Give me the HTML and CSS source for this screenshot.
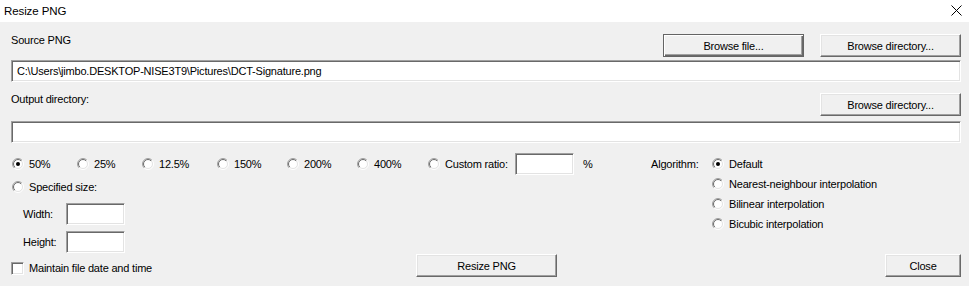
FILE: index.html
```html
<!DOCTYPE html>
<html>
<head>
<meta charset="utf-8">
<link rel="stylesheet" href="styles.css">
</head>
<body>
<svg class="defs" width="0" height="0">
  <defs>
    <linearGradient id="gOut" x1="0" y1="0" x2="1" y2="1">
      <stop offset="0.5" stop-color="#a0a0a0"/>
      <stop offset="0.5" stop-color="#ffffff"/>
    </linearGradient>
    <linearGradient id="gIn" x1="0" y1="0" x2="1" y2="1">
      <stop offset="0.5" stop-color="#696969"/>
      <stop offset="0.5" stop-color="#e3e3e3"/>
    </linearGradient>
    <symbol id="radio" viewBox="0 0 12 12">
      <circle cx="6" cy="6" r="5.5" fill="none" stroke="url(#gOut)" stroke-width="1"/>
      <circle cx="6" cy="6" r="4.5" fill="#fff" stroke="url(#gIn)" stroke-width="1"/>
    </symbol>
  </defs>
</svg>
<div class="window">
  <div class="titlebar">
    <span class="title">Resize PNG</span>
    <svg class="close-x" width="11" height="11" viewBox="0 0 11 11"><path d="M0.5 0.5 L10.5 10.5 M10.5 0.5 L0.5 10.5" stroke="#000" stroke-width="1" fill="none"/></svg>
  </div>
  <div class="content">
    <div class="row-head">
      <span class="lbl">Source PNG</span>
      <button class="btn default">Browse file...</button>
      <button class="btn">Browse directory...</button>
    </div>
    <div class="field wide first">C:\Users\jimbo.DESKTOP-NISE3T9\Pictures\DCT-Signature.png</div>
    <div class="row-head second">
      <span class="lbl">Output directory:</span>
      <button class="btn">Browse directory...</button>
    </div>
    <div class="field wide third"></div>

    <div class="options">
      <div class="left">
        <div class="ratio-row">
          <span class="opt w65"><svg class="rb" width="12" height="12"><use href="#radio"/><circle cx="6" cy="6" r="2" fill="#000"/></svg>50%</span>
          <span class="opt w65"><svg class="rb" width="12" height="12"><use href="#radio"/></svg>25%</span>
          <span class="opt w75"><svg class="rb" width="12" height="12"><use href="#radio"/></svg>12.5%</span>
          <span class="opt w70"><svg class="rb" width="12" height="12"><use href="#radio"/></svg>150%</span>
          <span class="opt w70"><svg class="rb" width="12" height="12"><use href="#radio"/></svg>200%</span>
          <span class="opt w71"><svg class="rb" width="12" height="12"><use href="#radio"/></svg>400%</span>
          <span class="opt w87"><svg class="rb" width="12" height="12"><use href="#radio"/></svg>Custom ratio:</span>
          <span class="field small"></span>
          <span class="pct">%</span>
        </div>
        <div class="spec-row">
          <span class="opt"><svg class="rb" width="12" height="12"><use href="#radio"/></svg>Specified size:</span>
        </div>
        <div class="dim-row">
          <span class="dim-lbl">Width:</span>
          <span class="field small"></span>
        </div>
        <div class="dim-row">
          <span class="dim-lbl">Height:</span>
          <span class="field small"></span>
        </div>
      </div>
      <div class="algo">
        <span class="algo-lbl">Algorithm:</span>
        <div class="algo-list">
          <span class="opt"><svg class="rb" width="12" height="12"><use href="#radio"/><circle cx="6" cy="6" r="2" fill="#000"/></svg>Default</span>
          <span class="opt"><svg class="rb" width="12" height="12"><use href="#radio"/></svg>Nearest-neighbour interpolation</span>
          <span class="opt"><svg class="rb" width="12" height="12"><use href="#radio"/></svg>Bilinear interpolation</span>
          <span class="opt"><svg class="rb" width="12" height="12"><use href="#radio"/></svg>Bicubic interpolation</span>
        </div>
      </div>
    </div>

    <div class="bottom">
      <span class="check"><span class="box"></span>Maintain file date and time</span>
      <button class="btn">Resize PNG</button>
      <button class="btn close">Close</button>
    </div>
  </div>
</div>
</body>
</html>
```

FILE: styles.css
```css
* { box-sizing: border-box; }
html, body { margin: 0; padding: 0; }
body {
  background: #f0f0f0;
  font-family: "Liberation Sans", Arial, sans-serif;
  font-size: 11px;
  letter-spacing: -0.2px;
  color: #000;
}
.defs { position: absolute; width: 0; height: 0; }
.window { width: 969px; height: 286px; overflow: hidden; }
.titlebar {
  height: 22px;
  background: #fff;
  display: flex;
  align-items: center;
  justify-content: space-between;
  padding: 0 7px 1px 4px;
}
.title { font-size: 11.5px; letter-spacing: -0.1px; }
.close-x { display: block; }
.content { padding: 12px 8px 0 11px; }
.row-head {
  display: flex;
  align-items: flex-start;
  height: 23px;
  gap: 16px;
}
.row-head.second { margin-top: 11px; }
.lbl { flex: 1; line-height: 13px; }
.btn {
  font-family: inherit;
  font-size: 11px;
  letter-spacing: -0.2px;
  color: #000;
  width: 141px;
  height: 23px;
  padding: 0;
  background: #f0f0f0;
  border: 1px solid;
  border-color: #fff #696969 #696969 #fff;
  box-shadow: inset -1px -1px #a0a0a0, inset 1px 1px #e3e3e3;
}
.btn.default {
  border-color: #646464;
  box-shadow: inset 1px 1px #fff, inset -1px -1px #696969, inset -2px -2px #a0a0a0;
}
.field {
  display: block;
  background: #fff;
  border: 1px solid;
  border-color: #a0a0a0 #fff #fff #a0a0a0;
  box-shadow: inset 1px 1px #696969, inset -1px -1px #e3e3e3;
  height: 22px;
  line-height: 20px;
  padding-left: 5px;
  white-space: nowrap;
}
.field.first { margin-top: 3px; }
.field.third { margin-top: 5px; }
.field.small { width: 59px; }
.options { display: flex; margin-top: 10px; }
.left { width: 640px; }
.ratio-row { display: flex; align-items: center; height: 22px; padding-left: 1px; }
.opt { display: inline-flex; align-items: center; white-space: nowrap; }
.rb { display: block; margin-right: 5px; flex: none; }
.w65 { width: 65px; }
.w70 { width: 70px; }
.w71 { width: 71px; }
.w75 { width: 75px; }
.w87 { width: 87px; }
.pct { margin-left: 9px; }
.spec-row { display: flex; align-items: center; height: 20px; margin-top: 2px; padding-left: 1px; }
.dim-row { display: flex; align-items: center; height: 22px; margin-top: 6px; padding-left: 12px; }
.dim-lbl { width: 43px; }
.algo { display: flex; align-items: flex-start; padding-top: 1px; }
.algo-lbl { width: 61px; line-height: 20px; }
.algo-list { display: flex; flex-direction: column; }
.algo-list .opt { height: 20px; }
.bottom { display: flex; align-items: center; height: 23px; margin-top: 1px; }
.check { display: inline-flex; align-items: center; width: 405px; padding-top: 5px; }
.box {
  width: 13px; height: 13px;
  background: #fff;
  border: 1px solid;
  border-color: #a0a0a0 #fff #fff #a0a0a0;
  box-shadow: inset 1px 1px #696969, inset -1px -1px #e3e3e3;
  margin-right: 5px;
}
.btn.close { width: 76px; margin-left: auto; }
```
